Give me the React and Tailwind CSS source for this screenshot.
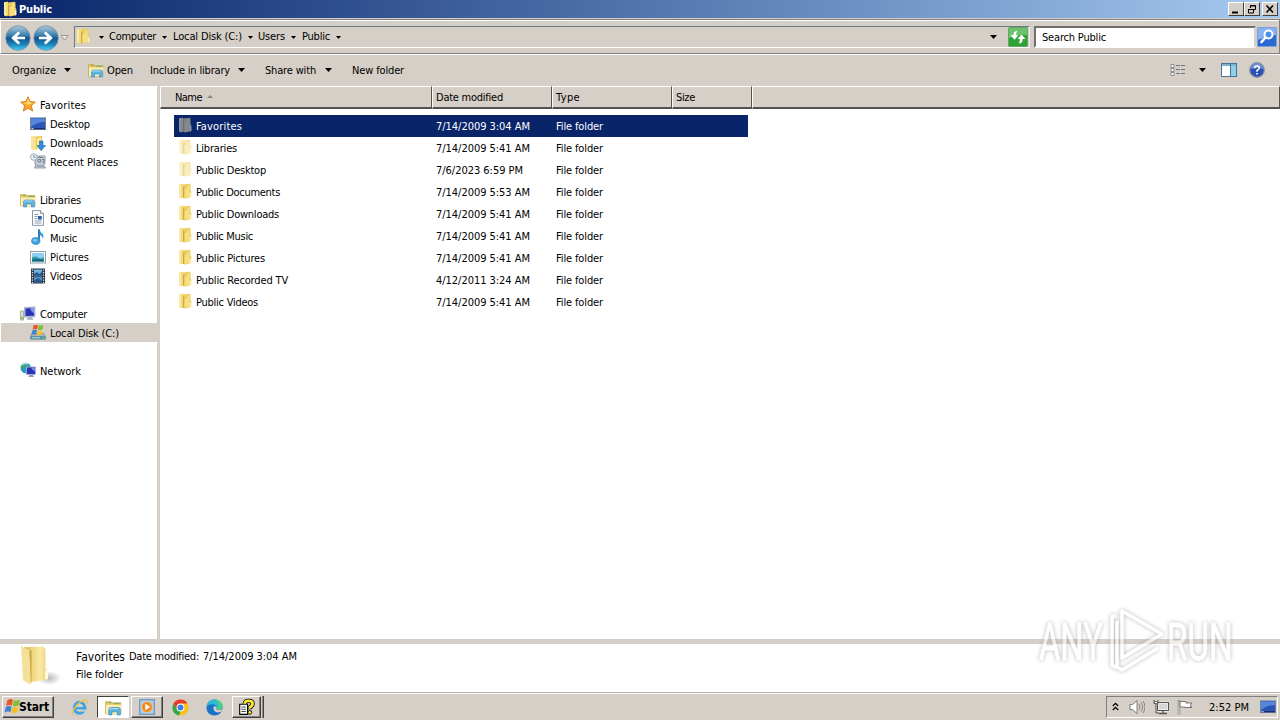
import React, { useLayoutEffect, useRef } from 'react';

// Single line label, letter spacing is adjusted so it takes exactly w pixels
function Label({ w, className = '', children }) {
	const ref = useRef(null);

	useLayoutEffect(() => {
		const el = ref.current;
		el.style.letterSpacing = '0px';
		const gap = (w - el.getBoundingClientRect().width) / el.textContent.length;
		el.style.letterSpacing = `${gap}px`;
	}, [w]);

	return <span ref={ref} className={`inline-block shrink-0 whitespace-pre ${className}`}>{children}</span>;
}

function Icon({ size = 16, className = '', children }) {
	return (
		<svg width={size} height={size} viewBox="0 0 16 16" className={`shrink-0 ${className}`}>
			{children}
		</svg>
	);
}

function FolderIcon({ className }) {
	return (
		<Icon className={className}>
			<path d="M2 1.500 6 .5v14L4.500 15.500l-2.500-1.500z" fill="#f3da7a" />
			<path d="M6 1.500 13 .8l.5 1.200v5l.8.6v6.400l-6 1.400-2.300-.7z" fill="#ecce5c" />
			<path d="M6 3l1.500 2v10.200L6 14.500z" fill="#cda742" />
			<path d="M7.500 6h2l1-3.500h2v11.200l-5 1.400z" fill="#f6df80" />
			<path d="M2 1.500 3.800 1v14.200L2 14z" fill="#fbecab" />
			<path d="M12.700 9.500h1.600V14l-1.600.4z" fill="#fff3c0" />
		</Icon>
	);
}

function LibraryIcon({ size = 16, className }) {
	return (
		<Icon size={size} className={className}>
			<path d="M.5 2.500h5l1 1h8.500v10.500H.5z" fill="#e7c765" stroke="#c2a04a" strokeWidth=".6" />
			<path d="M1 5.500h14.500l-.5 8.500H1z" fill="#fbeeb0" />
			<path d="M3 3.400h3M8 4.400h6" stroke="#6fae68" strokeWidth=".9" />
			<path d="M3.500 15V10q0-2 2-2h7q2 0 2 2v5h-3v-3h-5v3z" fill="#5bb5e2" stroke="#3487b9" strokeWidth=".6" />
			<path d="M4.500 10q0-1 1-1h7" stroke="#c9ecfb" strokeWidth=".8" fill="none" />
		</Icon>
	);
}

function StarIcon() {
	return (
		<Icon className="mb-[2px]">
			<path d="M8 .7l2.100 4.900 5.300.5-4 3.600 1.200 5.400L8 12.200l-4.600 2.900 1.200-5.400-4-3.600 5.300-.5z" fill="#f9a629" stroke="#d9771b" strokeWidth=".9" />
			<path d="M8 2.600 9.400 6.400l3.400.4L8 9z" fill="#ffe38a" />
			<path d="M8 2.600 6.600 6.400l-3.600.4L8 9z" fill="#ffd45c" />
		</Icon>
	);
}

function DesktopIcon() {
	return (
		<Icon>
			<rect x=".4" y="1.900" width="15.200" height="11.700" fill="#2a55b4" stroke="#6d7f9f" strokeWidth=".8" />
			<path d="M1 2.500h14v3.500Q7 6 1 11z" fill="#5686dc" />
			<path d="M1 12h14v1.300H1z" fill="#1c2f66" />
			<path d="M1.500 12.600h2" stroke="#d6e6fa" />
		</Icon>
	);
}

function DownloadsIcon() {
	return (
		<Icon>
			<path d="M1 1.500 5.500.5v14L3 15.300l-2-1.300z" fill="#f8e391" />
			<path d="M5.500 1.500 12 1v12.500l-6.500 1z" fill="#e9c854" />
			<path d="M7 3.500l4-1v11L7 14.500z" fill="#fbeb9f" />
			<path d="M9.500 6h3.500v4.500h2.500L11.200 15.700 7 10.500h2.500z" fill="#2e8fd8" stroke="#1767a9" strokeWidth=".6" />
		</Icon>
	);
}

function RecentIcon() {
	return (
		<Icon className="mb-px">
			<path d="M5 3h10v8h-2l2.500 4H4.500l1.500-4H5z" fill="#c6d0d9" stroke="#7d8c9a" strokeWidth=".8" />
			<path d="M8 4.500h5M8 6.500h2.500v2.500H8zM12 6.500h2v2.500h-2M6.500 13h7" stroke="#5f7082" strokeWidth=".8" fill="none" />
			<circle cx="3.800" cy="4" r="3.300" fill="#eef3f8" stroke="#8795a4" strokeWidth=".8" />
			<path d="M3.800 2v2.200h1.800" stroke="#4a6c95" strokeWidth=".8" fill="none" />
		</Icon>
	);
}

function DocumentIcon() {
	return (
		<Icon className="mb-px">
			<path d="M2.500.6h8l3 3v11.800h-11z" fill="#fbfdff" stroke="#7b8c9c" strokeWidth=".9" />
			<path d="M10.500.6v3h3" fill="#d5e0ea" stroke="#7b8c9c" strokeWidth=".8" />
			<path d="M4.500 4.500h4M4.500 6.500h3M4.500 11h7M4.500 13h7M4.500 8.700h3" stroke="#8797a8" strokeWidth=".9" />
			<rect x="8" y="6" width="3.800" height="3.600" fill="#2f62ad" />
		</Icon>
	);
}

function MusicIcon() {
	return (
		<Icon className="mb-px">
			<path d="M8 .5h1.600q.4 2.600 2.800 4.300 2 2 .2 5.200.3-3-3-4v6.500z" fill="#3a9ad6" />
			<path d="M8 .5h2v12H8z" fill="#2880bd" />
			<ellipse cx="5.800" cy="12" rx="4.200" ry="3.400" fill="#3fa3df" stroke="#2478b4" strokeWidth=".6" />
			<ellipse cx="5" cy="11.200" rx="1.800" ry="1.200" fill="#8dcff3" />
		</Icon>
	);
}

function PicturesIcon() {
	return (
		<Icon>
			<rect x=".5" y="2.500" width="15" height="11.500" fill="#fff" stroke="#8794a0" strokeWidth=".9" />
			<rect x="2" y="4" width="12" height="8.500" fill="#8fcdf0" />
			<path d="M2 8.500q3-2 6 0t6-.5v4.500H2z" fill="#2f9ea0" />
			<path d="M2 10.500q5-1.500 12 .5v1.500H2z" fill="#1c6c86" />
		</Icon>
	);
}

function VideosIcon() {
	return (
		<Icon>
			<rect x="1" y=".5" width="14" height="15" fill="#2c3541" />
			<rect x="4" y="1.500" width="8" height="6" fill="#6fb1e0" />
			<rect x="4" y="8.500" width="8" height="6" fill="#4c8ec8" />
			<path d="M4 6l3-2 2 2 3-2v3.500H4zM4 13l4-3 4 3v1.500H4z" fill="#25598e" />
			<path d="M2.500 1.500v14M13.500 1.500v14" stroke="#e8edf2" strokeWidth="1.200" strokeDasharray="1.200 1.300" />
		</Icon>
	);
}

function ComputerIcon() {
	return (
		<Icon>
			<rect x=".5" y="5" width="3" height="9" fill="#d7dfc9" stroke="#8a9a86" strokeWidth=".7" />
			<path d="M1.200 11h1.600v2H1.200z" fill="#6bb536" />
			<path d="M4.500 1.500 15 .8v10l-10.500.4z" fill="#bcc4dc" stroke="#8490b8" strokeWidth=".6" />
			<path d="M5.500 2.500 14 2v7.800l-8.500.3z" fill="#2731b4" />
			<path d="M10 2.200 14 2v5q-3-1-4-4.800z" fill="#7f92ee" />
			<path d="M8 11.200h4l1.500 2.500h-7z" fill="#a7aec2" />
		</Icon>
	);
}

function Flag() {
	return (
		<>
			<path d="M3.500 2.500Q6 1 8 2.200L7 6.800Q5 5.800 2.500 7z" fill="#e8562a" />
			<path d="M8.700 2.400q2.300 1 4.800-.2l-1 4.600q-2.500 1.200-4.700.2z" fill="#83bd35" />
			<path d="M2.300 7.700Q5 6.600 6.900 7.600l-1 4.500q-2-1-4.600.2z" fill="#3f83d8" />
			<path d="M7.600 7.800q2.300 1 4.700-.1l-1 4.500q-2.500 1.200-4.700.2z" fill="#f7bf25" />
		</>
	);
}

function DiskIcon() {
	return (
		<Icon>
			<path d="M1.500 8.500h12l2 3v2.500H.5v-2.500z" fill="#a9b6bf" stroke="#70818d" strokeWidth=".6" />
			<path d="M.5 11h15v3.500H.5z" fill="#5793a5" />
			<path d="M2 12.800h8" stroke="#b4dbe4" />
			<path d="M12.500 12.300h2v1h-2z" fill="#7fe04a" />
			<g transform="translate(.2 -2.200) scale(.98)"><Flag /></g>
		</Icon>
	);
}

function NetworkIcon() {
	return (
		<Icon className="mb-[2px]">
			<circle cx="5.800" cy="6" r="5.300" fill="#2b9cc0" />
			<path d="M1 5q2-4 5-3.500L5 5 3 7zM6 6l3-2 2 3-3 4-2-2z" fill="#3fa858" />
			<path d="M2.500 3Q5 .8 8 2" stroke="#c9eef8" fill="none" />
			<rect x="6.500" y="5" width="9" height="7.500" fill="#2733b6" stroke="#a6b1d2" strokeWidth=".9" />
			<path d="M11 5.500h4v4q-3-1-4-4z" fill="#7187e6" />
			<path d="M9.500 13h3.500l1 2h-5.500z" fill="#8c97b5" />
		</Icon>
	);
}

function NavButton({ id, flip }) {
	return (
		<svg width="26" height="26" viewBox="0 0 26 26" className="shrink-0">
			<defs>
				<linearGradient id={id} x1="0" y1="0" x2="0" y2="1">
					<stop offset="0" stopColor="#b5cad6" />
					<stop offset=".35" stopColor="#4389b5" />
					<stop offset=".52" stopColor="#14568e" />
					<stop offset=".75" stopColor="#1a82b8" />
					<stop offset="1" stopColor="#3dd4f6" />
				</linearGradient>
			</defs>
			<circle cx="13" cy="13" r="12.200" fill={`url(#${id})`} stroke="#6a8ca4" strokeWidth=".8" />
			<path
				d="M20 11.700h-8.300l3.500-3.500-2-1.700L6.200 13l7 6.500 2-1.700-3.500-3.500H20z"
				fill="#fff"
				transform={flip ? 'translate(26 0) scale(-1 1)' : undefined}
			/>
		</svg>
	);
}

function Caret({ className = '' }) {
	return (
		<svg width="7" height="4" viewBox="0 0 7 4" className={`shrink-0 ${className}`}>
			<path d="M0 0h7L3.500 4z" fill="#000" />
		</svg>
	);
}

function SmallCaret({ className = '' }) {
	return (
		<svg width="5" height="3" viewBox="0 0 5 3" className={`shrink-0 ${className}`}>
			<path d="M0 0h5L2.500 3z" fill="#000" />
		</svg>
	);
}

function WindowButton({ children, className = '' }) {
	return (
		<div className={`flex h-[14px] w-4 items-center justify-center border border-t-white border-l-white border-r-[#404040] border-b-[#404040] bg-[#d5cfc7] ${className}`}>
			<svg width="12" height="11" viewBox="0 0 12 11" fill="none" stroke="#000">{children}</svg>
		</div>
	);
}

function TitleBar() {
	return (
		<div className="flex h-[18px] items-center bg-linear-to-r from-[#0a246a] to-[#a6caf0] pr-[2px] pl-[2px]">
			<FolderIcon />
			<Label w={33} className="ml-px pt-[2px] font-bold text-white">Public</Label>
			<WindowButton className="ml-auto"><path d="M2 8.500h6" strokeWidth="2" /></WindowButton>
			<WindowButton>
				<path d="M4.500 4V1.500h5v4H8M4 2h6M2.500 5.500h5v3.500h-5zM2 5.500h6" />
			</WindowButton>
			<WindowButton className="ml-[2px]"><path d="M2.500 1.500l6.500 7M9 1.500 2.500 8.500" strokeWidth="1.600" /></WindowButton>
		</div>
	);
}

const crumbs = [
	{ name: 'Computer', w: 47, gap: 'mr-[6px]' },
	{ name: 'Local Disk (C:)', w: 69, gap: 'mr-[5px]' },
	{ name: 'Users', w: 27, gap: 'mr-[6px]' },
	{ name: 'Public', w: 28, gap: 'mr-[6px]' },
];

function AddressRow() {
	return (
		<div className="flex h-[35px] items-start border border-t-[#808080] border-r-[#808080] border-b-[#808080] border-l-white bg-[#d5cfc7] pt-[4px] shadow-[inset_0_1px_0_#fff]">
			<div className="flex w-[73px] items-center pt-px pl-[4px]">
				<NavButton id="back" />
				<div className="ml-[2px]"><NavButton id="forward" flip /></div>
				<svg width="9" height="6" viewBox="0 0 9 6" className="ml-px shrink-0">
					<path d="M1 .5h7L4.500 5z" fill="#eee" stroke="#8c8780" strokeWidth=".8" />
				</svg>
			</div>
			<div className="mt-[2px] flex h-[22px] w-[956px] items-center border border-t-[#6f7a80] border-r-[#eee] border-b-white border-l-[#6f7a80] pr-px">
				<FolderIcon className="mb-[2px]" />
				<SmallCaret className="mr-[5px] ml-[8px]" />
				{crumbs.map((c) => (
					<div key={c.name} className="flex items-center">
						<Label w={c.w} className="mr-[6px]">{c.name}</Label>
						<SmallCaret className={c.gap} />
					</div>
				))}
				<Caret className="ml-auto mr-[11px]" />
				<svg width="20" height="20" viewBox="0 0 20 20" className="shrink-0">
					<rect x=".5" y=".5" width="19" height="19" rx="1" fill="#2da335" stroke="#65a567" />
					<path d="M1 1h18v7Q10 7 1 11z" fill="#6cc36f" />
					<path d="M9.500 4Q5.200 4 5.300 8.200H2.500l4 4.600 4-4.600H8.200Q8 5.500 9.500 4z" fill="#fff" />
					<path d="M10.500 16.500q4.300 0 4.200-4.500h2.800l-4-4.600-4 4.600h2.300q.2 2.900-1.300 4.500z" fill="#fff" />
				</svg>
			</div>
			<div className="mt-[2px] ml-[4px] flex h-[22px] w-[222px] items-center border-2 border-t-[#6f6f6f] border-r-[#d5cfc7] border-b-white border-l-[#6f6f6f] bg-white pl-[6px]">
				<Label w={64} className="pt-[2px]">Search Public</Label>
			</div>
			<svg width="20" height="20" viewBox="0 0 20 20" className="mt-[3px] ml-px shrink-0">
				<rect x=".5" y=".5" width="19" height="19" rx="1" fill="#2c68d2" stroke="#7e9fda" />
				<path d="M1 1h18v7Q10 9 1 13z" fill="#86b0ef" />
				<circle cx="11.500" cy="7.500" r="4" fill="#4d8fe8" stroke="#fff" strokeWidth="2" />
				<path d="M8.500 10.500 4.500 15" stroke="#fff" strokeWidth="2.600" strokeLinecap="round" />
			</svg>
		</div>
	);
}

function Toolbar() {
	return (
		<div className="flex h-[32px] items-center border-t border-white bg-[#d5cfc7] pb-px pl-3">
			<Label w={44} className="pt-[2px]">Organize</Label>
			<Caret className="ml-[8px]" />
			<LibraryIcon className="ml-[17px]" />
			<Label w={26} className="ml-[3px] pt-[2px]">Open</Label>
			<Label w={80} className="ml-[17px] pt-[2px]">Include in library</Label>
			<Caret className="ml-[8px]" />
			<Label w={51} className="ml-[20px] pt-[2px]">Share with</Label>
			<Caret className="ml-[9px]" />
			<Label w={52} className="ml-[20px] pt-[2px]">New folder</Label>
			<Icon className="ml-auto">
				<path d="M1 2.500h3v3H1zM1 6.500h3v3H1zM1 10.500h3v3H1z" fill="#fff" stroke="#77777f" strokeWidth=".8" />
				<path d="M6 3.500h4M11 3.500h4M6 7.500h4M11 7.500h4M6 11.500h4M11 11.500h4" stroke="#6d757d" />
			</Icon>
			<Caret className="ml-[13px]" />
			<svg width="16" height="14" viewBox="0 0 16 14" className="ml-[15px] shrink-0">
				<rect x=".5" y=".5" width="15" height="13" fill="#fff" stroke="#4b7493" />
				<path d="M1 2h14" stroke="#7eb0cf" strokeWidth="2" />
				<rect x="10" y="3" width="5" height="10" fill="#8fd0ec" />
				<path d="M9.500 1v12" stroke="#4b7493" />
			</svg>
			<Icon className="mr-[15px] ml-[12px]">
				<circle cx="8" cy="8" r="7.300" fill="#2c4fb8" stroke="#8e92a4" strokeWidth="1.300" />
				<path d="M2 7a6 6 0 0 1 12 0Q8 5 2 7z" fill="#7191dc" />
				<path d="M5.700 6.300Q5.700 4 8 4t2.300 2Q10.300 7.200 8 8.400v1.400M8 11v1.600" stroke="#fff" strokeWidth="1.600" fill="none" />
			</Icon>
		</div>
	);
}

const tree = [
	{ name: 'Favorites', w: 46, icon: StarIcon },
	{ name: 'Desktop', w: 40, icon: DesktopIcon, child: true },
	{ name: 'Downloads', w: 53, icon: DownloadsIcon, child: true },
	{ name: 'Recent Places', w: 68, icon: RecentIcon, child: true },
	null,
	{ name: 'Libraries', w: 41, icon: LibraryIcon },
	{ name: 'Documents', w: 54, icon: DocumentIcon, child: true },
	{ name: 'Music', w: 27, icon: MusicIcon, child: true },
	{ name: 'Pictures', w: 39, icon: PicturesIcon, child: true },
	{ name: 'Videos', w: 32, icon: VideosIcon, child: true },
	null,
	{ name: 'Computer', w: 47, icon: ComputerIcon },
	{ name: 'Local Disk (C:)', w: 69, icon: DiskIcon, child: true, selected: true },
	null,
	{ name: 'Network', w: 41, icon: NetworkIcon },
];

function Sidebar() {
	return (
		<div className="w-[160px] shrink-0 border-r-[3px] border-[#d5cfc7] bg-white pt-[9px] pl-px">
			{tree.map((item, i) => {
				if (!item) return <div key={i} className="h-[19px]" />;
				const TreeIcon = item.icon;
				return (
					<div key={item.name} className={`flex h-[19px] items-center gap-1 ${item.child ? 'pl-[29px]' : 'pl-[19px]'} ${item.selected ? 'bg-[#d5cfc7]' : ''}`}>
						<TreeIcon />
						<Label w={item.w} className="pt-[2px]">{item.name}</Label>
					</div>
				);
			})}
		</div>
	);
}

const files = [
	{ name: 'Favorites', w: 46, date: '7/14/2009 3:04 AM', dw: 94, selected: true },
	{ name: 'Libraries', w: 41, date: '7/14/2009 5:41 AM', dw: 94, hidden: true },
	{ name: 'Public Desktop', w: 70, date: '7/6/2023 6:59 PM', dw: 87, hidden: true },
	{ name: 'Public Documents', w: 84, date: '7/14/2009 5:53 AM', dw: 94 },
	{ name: 'Public Downloads', w: 83, date: '7/14/2009 5:41 AM', dw: 94 },
	{ name: 'Public Music', w: 57, date: '7/14/2009 5:41 AM', dw: 94 },
	{ name: 'Public Pictures', w: 69, date: '7/14/2009 5:41 AM', dw: 94 },
	{ name: 'Public Recorded TV', w: 92, date: '4/12/2011 3:24 AM', dw: 94 },
	{ name: 'Public Videos', w: 62, date: '7/14/2009 5:41 AM', dw: 94 },
];

function HeaderCell({ className, children }) {
	return (
		<div className={`flex items-center border border-b-2 border-t-white border-l-white border-r-[#55534f] border-b-[#55534f] bg-[#d5cfc7] ${className}`}>
			{children}
		</div>
	);
}

function FileList() {
	return (
		<div className="flex-1 bg-white">
			<div className="flex h-[23px]">
				<HeaderCell className="w-[272px] pl-[14px]">
					<Label w={27} className="pt-[2px]">Name</Label>
					<svg width="6" height="3" viewBox="0 0 6 3" className="mb-[2px] ml-[5px]"><path d="M0 3h6L3 0z" fill="#8b857d" /></svg>
				</HeaderCell>
				<HeaderCell className="w-[120px] pl-[3px]"><Label w={67} className="pt-[2px]">Date modified</Label></HeaderCell>
				<HeaderCell className="w-[120px] pl-[3px]"><Label w={24} className="pt-[2px]">Type</Label></HeaderCell>
				<HeaderCell className="w-[80px] pl-[3px]"><Label w={19} className="pt-[2px]">Size</Label></HeaderCell>
				<HeaderCell className="flex-1" />
			</div>
			<div className="pt-[6px] pl-[14px]">
				{files.map((f) => (
					<div key={f.name} className={`flex h-[22px] w-[574px] items-center ${f.selected ? 'bg-[#0a246a] text-white' : ''}`}>
						<div className="flex w-[262px] items-center gap-[3px] pl-[3px]">
							<FolderIcon className={f.selected ? 'mb-[2px] opacity-55 saturate-50' : f.hidden ? 'mb-[2px] opacity-50' : 'mb-[2px]'} />
							<Label w={f.w} className="pt-[2px]">{f.name}</Label>
						</div>
						<div className="w-[120px] pt-[2px]"><Label w={f.dw}>{f.date}</Label></div>
						<Label w={47} className="pt-[2px]">File folder</Label>
					</div>
				))}
			</div>
		</div>
	);
}

function DetailsPane() {
	return (
		<div className="flex h-[53px] border-t-[5px] border-[#d5cfc7] bg-white pl-[18px]">
			<svg width="44" height="44" viewBox="0 0 44 44" className="shrink-0">
				<defs>
					<linearGradient id="bigFolder" x1="0" x2="1">
						<stop offset="0" stopColor="#d9b95a" />
						<stop offset=".45" stopColor="#f4dd88" />
						<stop offset=".7" stopColor="#f8e9a6" />
						<stop offset="1" stopColor="#ecd074" />
					</linearGradient>
					<radialGradient id="folderShade">
						<stop offset="0" stopColor="#888" stopOpacity=".6" />
						<stop offset="1" stopColor="#888" stopOpacity="0" />
					</radialGradient>
				</defs>
				<ellipse cx="31" cy="34" rx="12" ry="7" fill="url(#folderShade)" />
				<path d="M6 3 25 2.500l2.500 3v19l2 2v9L13 38z" fill="url(#bigFolder)" />
				<path d="M3 1.500 11.500 7 13 40.500 5 36.500z" fill="#f5e09a" />
				<path d="M11.500 7 13.500 6v31L13 40.500z" fill="#c9a544" />
				<path d="M27 27q2.500-3 3 0v8l-3 .5z" fill="#fffbe3" />
			</svg>
			<div className="ml-[14px] pt-[4px]">
				<div className="flex h-[17px] items-center">
					<Label w={49} className="text-[12px]">Favorites</Label>
					<Label w={70} className="ml-[4px]">Date modified:</Label>
					<Label w={94} className="ml-[4px]">7/14/2009 3:04 AM</Label>
				</div>
				<div className="flex h-[18px] items-center pt-px"><Label w={47}>File folder</Label></div>
			</div>
		</div>
	);
}

function TaskButton({ className = '', children }) {
	return (
		<div className={`flex h-[22px] items-center border border-t-white border-l-white border-r-[#404040] border-b-[#404040] shadow-[inset_-1px_-1px_0_#808080] ${className}`}>
			{children}
		</div>
	);
}

function Taskbar() {
	return (
		<div className="flex h-[28px] items-start border-t border-[#b5b0a8] bg-[#d5cfc7] pt-[3px] pr-[2px] pl-[2px] shadow-[inset_0_1px_0_#fff]">
			<TaskButton className="w-[52px]">
				<Icon size={20}><Flag /></Icon>
				<Label w={30} className="-ml-[4px] text-[12px] font-bold">Start</Label>
			</TaskButton>
			<Icon size={17} className="mt-[3px] ml-[17px]">
				<ellipse cx="8" cy="8.300" rx="5" ry="5.200" fill="none" stroke="#3ba4e4" strokeWidth="2.800" />
				<path d="M9 9.800h6.500v2H9z" fill="#d5cfc7" />
				<path d="M4 7.600h10.300v2.200H4z" fill="#3ba4e4" />
				<path d="M2.200 15Q-.5 13 4 7.500 9.500 1 13.500 1q2.500.3 1 3.800" fill="none" stroke="#efc044" strokeWidth="1.300" />
			</Icon>
			<div className="ml-[9px] flex h-[22px] w-[32px] items-center justify-center border border-t-[#404040] border-r-white border-b-white border-l-[#404040] bg-white">
				<LibraryIcon size={17} />
			</div>
			<TaskButton className="ml-[2px] w-[32px] justify-center">
				<Icon>
					<rect x=".7" y=".7" width="14.600" height="14.600" fill="#a9cdee" stroke="#6b93bd" strokeWidth="1.200" />
					<circle cx="8" cy="8" r="5.500" fill="#f28a1c" stroke="#fbe2bd" strokeWidth=".6" />
					<path d="M6.300 4.800 11.300 8l-5 3.200z" fill="#fff" />
				</Icon>
			</TaskButton>
			<Icon size={17} className="mt-[3px] ml-[9px]">
				<circle cx="8" cy="8" r="7.600" fill="#fbc116" />
				<path d="M1.400 4.200A7.600 7.600 0 0 1 14.600 4.200H8L4.700 10z" fill="#e33b2e" />
				<path d="M1.400 4.200 4.700 9.900 8 11.600 6.700 15.500A7.600 7.600 0 0 1 1.400 4.200z" fill="#2da94f" />
				<circle cx="8" cy="8" r="3.700" fill="#fff" />
				<circle cx="8" cy="8" r="2.800" fill="#3d7de8" />
			</Icon>
			<Icon size={17} className="mt-[3px] ml-[17px]">
				<circle cx="8" cy="8" r="7.600" fill="#1873c9" />
				<path d="M.5 7Q1.500.6 8 .4q7.200.6 7.600 6.600-.4 3-3.600 3-2.500 0-2.200-1.200Q10.500 6 7 5 3 4.300.5 7z" fill="#30b8d0" />
				<path d="M9 .5q6.200.9 6.600 6.500-.4 3-3.600 3-1.500 0-2-.6Q14 6 9 .5z" fill="#4fcf80" />
				<path d="M7 7.500Q6.500 12 11 12.600q2.500 0 5-1.500V9.500q-3.500 1.500-6 .3Q9.500 9 9.900 8 9 6 7 7.500z" fill="#d5cfc7" />
			</Icon>
			<TaskButton className="ml-[9px] w-[29px] justify-center">
				<Icon size={18}>
					<path d="M1.500 5.500h7v9h-7z" fill="#fff" stroke="#000" />
					<path d="M3 8h4M3 10h4M3 12h4" stroke="#333" strokeWidth=".8" />
					<path d="M6 5Q6 2.500 9.500 2.500T13 5Q13 6.800 10.500 8.300V10" stroke="#000" strokeWidth="3.800" fill="none" />
					<path d="M6 5Q6 2.500 9.500 2.500T13 5Q13 6.800 10.500 8.300V9.500" stroke="#ffe932" strokeWidth="2.400" fill="none" />
					<circle cx="10.500" cy="12.800" r="1.700" fill="#ffe932" stroke="#000" strokeWidth=".8" />
				</Icon>
			</TaskButton>
			<div className="ml-px h-[22px] w-[2px] border-r border-[#404040] bg-[#908b84]" />

			<div className="ml-auto flex h-[22px] w-[172px] items-center border border-t-[#808080] border-r-white border-b-white border-l-[#808080]">
				<svg width="7" height="9" viewBox="0 0 7 9" className="mb-[2px] ml-[5px] shrink-0" fill="none" stroke="#000" strokeWidth="1.300">
					<path d="M.8 4 3.500 1.300 6.200 4M.8 8 3.500 5.300 6.200 8" />
				</svg>
				<Icon className="ml-[10px]">
					<path d="M1 5.500h2.500L8 1.500v13l-4.500-4H1z" fill="#fff" stroke="#6f6f6f" strokeWidth=".9" />
					<path d="M10 5q2 3 0 6M12 3.500q3.300 4.500 0 9M14 2q4 6 0 12" fill="none" stroke="#7b7b7b" strokeWidth=".9" />
				</Icon>
				<Icon className="ml-[8px]">
					<rect x="4.500" y="3.500" width="11" height="8" fill="#d6d6d6" stroke="#fff" strokeWidth="2" />
					<rect x="4.500" y="3.500" width="11" height="8" fill="none" stroke="#555" />
					<path d="M6 14.500h8M10 12v2.500" stroke="#555" strokeWidth="1.300" />
					<path d="M1 1v3.500h4V1M3 4.500v9.500h3" fill="none" stroke="#555" />
					<path d="M1.500 2.500h3v2h-3z" fill="#fff" stroke="#555" strokeWidth=".8" />
				</Icon>
				<Icon className="ml-[8px]">
					<path d="M2 1v14.500" stroke="#666" strokeWidth="2.400" />
					<path d="M2 1.500v14" stroke="#fff" strokeWidth="1" />
					<path d="M3 2.500h6v1.500h6l-2 3 2 1.500H8V8H3z" fill="#fff" stroke="#666" strokeWidth=".9" />
				</Icon>
				<Label w={40} className="ml-[16px] pt-[2px]">2:52 PM</Label>
				<div className="ml-[11px]"><DesktopIcon /></div>
			</div>
		</div>
	);
}

function Watermark() {
	return (
		<svg width="210" height="76" viewBox="0 0 210 76" className="absolute top-[603px] left-[1030px] opacity-60 drop-shadow-[0_0_2px_#888]">
			<g fill="#fff" stroke="#fff" strokeWidth=".8" fontFamily="Roboto" fontSize="52">
				<text transform="translate(9 57) scale(.63 1)">ANY</text>
				<text transform="translate(137 57) scale(.64 1)">RUN</text>
			</g>
			<g fill="none" stroke="#fff" strokeWidth="3.500" strokeLinejoin="round">
				<path d="M92 8 132 31 92 55z" />
				<path d="M86 13h-4v49l5 3M87 18v46l5 3 36-22" />
			</g>
		</svg>
	);
}

export default function App() {
	return (
		<div className="relative flex h-[720px] w-[1280px] flex-col overflow-hidden bg-[#d5cfc7] font-['DejaVu_Sans_Condensed','DejaVu_Sans',sans-serif] text-[11px] leading-[14px] text-black">
			<TitleBar />
			<div className="h-px shrink-0" />
			<AddressRow />
			<Toolbar />
			<div className="flex min-h-0 flex-1">
				<Sidebar />
				<FileList />
			</div>
			<DetailsPane />
			<Taskbar />
			<Watermark />
		</div>
	);
}
